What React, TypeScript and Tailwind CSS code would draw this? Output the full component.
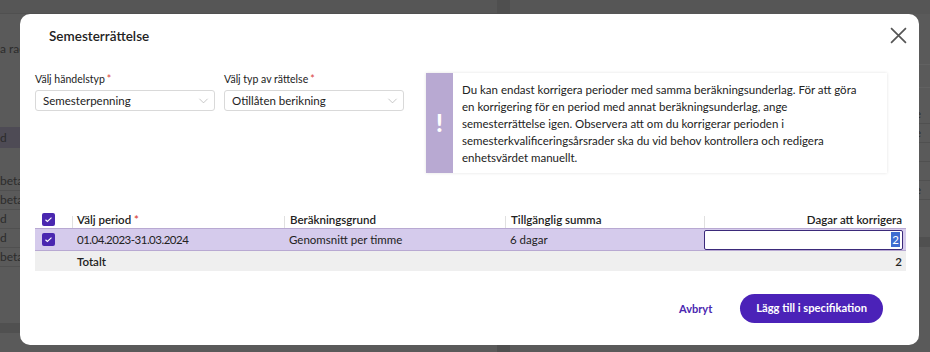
import React from "react";

const font = { fontFamily: "Lato, 'Liberation Sans', sans-serif" };

const Check = () => (
  <span className="flex h-[13px] w-[13px] items-center justify-center rounded-[2px] bg-[#4a27b0]">
    <svg viewBox="0 0 12 12" className="h-[9px] w-[9px]" fill="none" stroke="white" strokeWidth="1.5">
      <path d="M2 6.3l2.5 2.4L10 3.4" />
    </svg>
  </span>
);

const Chevron = () => (
  <svg viewBox="0 0 12 8" className="h-[6px] w-[11px]" fill="none" stroke="#b4b4b4" strokeWidth="1">
    <path d="M0.5 1l5.5 5.5L11.5 1" />
  </svg>
);

const Select = ({ label, value }: { label: string; value: string }) => (
  <div className="flex w-[180px] flex-col gap-[3px]">
    <span className="text-[10.5px] leading-[16px] text-[#222]">
      {label}
      <span className="ml-[2px] text-[#d9453b]">*</span>
    </span>
    <div className="flex h-[21px] items-center justify-between rounded-[3px] border border-[#d9d9d9] bg-white pl-[7px] pr-[5px]">
      <span className="text-[11.5px] text-[#222]">{value}</span>
      <Chevron />
    </div>
  </div>
);

const BgRow = ({ text }: { text: string }) => (
  <div className="flex h-[19px] items-center border-b border-[#505050] text-[12px] text-[#2c2c2c]">{text}</div>
);

export default function App() {
  return (
    <div className="relative h-[352px] w-[930px] overflow-hidden bg-[#5a5a5a]" style={font}>
      {/* dimmed page behind */}
      <div className="flex h-full">
        <div className="flex w-[497px] flex-col">
          <div className="h-[14px] border-b border-[#505050] bg-[#565656]" />
          <div className="h-[24px]" />
          <div className="flex h-[22px] items-center text-[12px] text-[#2c2c2c]">a rad</div>
          <div className="h-[67px]" />
          <div className="flex h-[21px] items-center bg-[#4e4b55] text-[12px] text-[#2c2c2c]">d</div>
          <div className="h-[24px]" />
          <BgRow text="beta" />
          <BgRow text="beta" />
          <BgRow text="d" />
          <BgRow text="d" />
          <BgRow text="beta" />
          <div className="flex-1" />
          <div className="mb-[19px] h-[10px] bg-[#505050]" />
        </div>
        <div className="w-[13px] bg-[#4f4f4f]" />
        <div className="flex flex-1 flex-col">
          <div className="h-[14px] bg-[#565656]" />
          <div className="h-[50px]" />
          <div className="flex h-[24px] items-center justify-end border-y border-[#616161] pr-[2px] text-[12px] text-[#2c2c2c]">
            <span className="w-[20px]">id</span>
          </div>
          <div className="h-[17px]" />
          {["be", "be", "id", "id", "be"].map((t, i) => (
            <div key={i} className="flex h-[19px] items-center justify-end border-b border-[#505050] pr-[2px] text-[12px] text-[#2c2c2c]">
              <span className="w-[20px]">{t}</span>
            </div>
          ))}
          <div className="h-[37px]" />
          <div className="h-[10px] bg-[#505050]" />
        </div>
      </div>

      {/* modal */}
      <div className="absolute left-[20px] top-[14px] flex h-[331px] w-[899px] flex-col rounded-[10px] bg-white px-[15px] text-[#222]">
        <div className="flex items-center justify-between pt-[9px]">
          <h2 className="pl-[14px] pt-[3px] text-[13.5px] font-semibold text-[#222]">Semesterrättelse</h2>
          <svg viewBox="0 0 16 16" className="mr-[-3px] mt-[2px] h-[17px] w-[17px]" fill="none" stroke="#555" strokeWidth="1.6">
            <path d="M1 1l14 14M15 1L1 15" />
          </svg>
        </div>

        <div className="mt-[25px] flex items-start">
          <div className="flex gap-[9px]">
            <Select label="Välj händelstyp" value="Semesterpenning" />
            <Select label="Välj typ av rättelse" value="Otillåten berikning" />
          </div>
          <div className="ml-[22px] mt-[2px] flex h-[100px] w-[461px] bg-white shadow-[0_0_3px_rgba(0,0,0,0.12)]">
            <div className="flex w-[27px] shrink-0 items-center justify-center bg-[#b8a9d2]">
              <span className="text-[24px] font-black leading-none text-white">!</span>
            </div>
            <p className="pl-[9px] pt-[8px] text-[11.5px] leading-[17px] text-[#222]">
              Du kan endast korrigera perioder med samma beräkningsunderlag. För att göra
              <br />
              en korrigering för en period med annat beräkningsunderlag, ange
              <br />
              semesterrättelse igen. Observera att om du korrigerar perioden i
              <br />
              semesterkvalificeringsårsrader ska du vid behov kontrollera och redigera
              <br />
              enhetsvärdet manuellt.
            </p>
          </div>
        </div>

        <div className="mt-[37px] w-[871px] text-[11.5px]">
          <div className="flex h-[19px] items-center border-b border-[#b8a9d2] font-semibold">
            <div className="flex w-[37px] pl-[7px]">
              <Check />
            </div>
            <div className="h-[12px] w-px self-end bg-[#e0e0e0]" />
            <div className="w-[211px] pl-[4px]">
              Välj period <span className="text-[#d9453b]">*</span>
            </div>
            <div className="h-[12px] w-px self-end bg-[#e0e0e0]" />
            <div className="w-[220px] pl-[5px]">Beräkningsgrund</div>
            <div className="h-[12px] w-px self-end bg-[#e0e0e0]" />
            <div className="w-[198px] pl-[5px]">Tillgänglig summa</div>
            <div className="h-[12px] w-px self-end bg-[#e0e0e0]" />
            <div className="flex-1 pr-[4px] text-right">Dagar att korrigera</div>
          </div>
          <div className="flex h-[22px] items-center border-b border-[#b8a9d2] bg-[#d5cbec]">
            <div className="flex w-[37px] pl-[7px]">
              <Check />
            </div>
            <div className="w-[212px] pl-[5px] tracking-[-0.5px]">01.04.2023-31.03.2024</div>
            <div className="w-[221px] pl-[5px]">Genomsnitt per timme</div>
            <div className="w-[199px] pl-[5px]">6 dagar</div>
            <div className="flex h-[20px] flex-1 items-center justify-end rounded-[2px] border border-[#3b2a7a] bg-white pr-[2px]">
              <span className="bg-[#3e6cd0] px-[1px] leading-[15px] text-white">2</span>
            </div>
            <div className="w-[3px]" />
          </div>
          <div className="flex h-[20px] items-center bg-[#efefef] font-semibold">
            <div className="w-[37px]" />
            <div className="flex-1 pl-[5px]">Totalt</div>
            <div className="pr-[4px]">2</div>
          </div>
        </div>

        <div className="mt-[23px] flex items-center justify-end gap-[28px] pr-[21px]">
          <button className="text-[11px] font-bold text-[#4a27b0]">Avbryt</button>
          <button className="h-[29px] rounded-full bg-[#4b22b8] px-[16px] text-[11.2px] font-bold text-white">
            Lägg till i specifikation
          </button>
        </div>
      </div>
    </div>
  );
}
